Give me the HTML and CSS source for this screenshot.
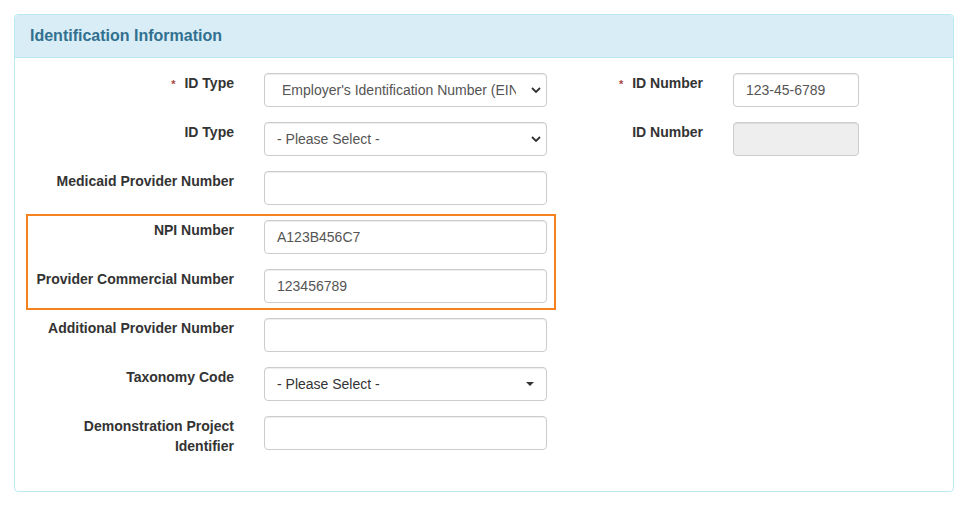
FILE: index.html
```html
<!DOCTYPE html>
<html lang="en">
<head>
<meta charset="utf-8">
<title>Identification Information</title>
<link rel="stylesheet" href="styles.css">
</head>
<body>
<div class="panel">
  <div class="panel-heading">Identification Information</div>
  <div class="panel-body">
    <div class="col-left">
      <div class="row">
        <label class="lbl"><span class="req">*</span>ID Type</label>
        <div class="select-wrap">
          <select class="ctl sel sel-ein"><option>Employer's Identification Number (EIN)</option></select>
          <svg class="chev" width="10" height="6" viewBox="0 0 10 6"><path d="M1 1 L5 5 L9 1" fill="none" stroke="#333" stroke-width="1.8"/></svg>
        </div>
      </div>
      <div class="row">
        <label class="lbl">ID Type</label>
        <div class="select-wrap">
          <select class="ctl sel"><option>- Please Select -</option></select>
          <svg class="chev" width="10" height="6" viewBox="0 0 10 6"><path d="M1 1 L5 5 L9 1" fill="none" stroke="#333" stroke-width="1.8"/></svg>
        </div>
      </div>
      <div class="row">
        <label class="lbl">Medicaid Provider Number</label>
        <input class="ctl" type="text" value="">
      </div>
      <div class="highlight">
        <div class="row">
          <label class="lbl">NPI Number</label>
          <input class="ctl" type="text" value="A123B456C7">
        </div>
        <div class="row">
          <label class="lbl">Provider Commercial Number</label>
          <input class="ctl" type="text" value="123456789">
        </div>
      </div>
      <div class="row">
        <label class="lbl">Additional Provider Number</label>
        <input class="ctl" type="text" value="">
      </div>
      <div class="row">
        <label class="lbl">Taxonomy Code</label>
        <div class="ctl dropdown">
          <span>- Please Select -</span>
          <span class="caret"></span>
        </div>
      </div>
      <div class="row last">
        <label class="lbl">Demonstration Project Identifier</label>
        <input class="ctl" type="text" value="">
      </div>
    </div>
    <div class="col-right">
      <div class="row row-r">
        <label class="lbl"><span class="req">*</span>ID Number</label>
        <input class="ctl" type="text" value="123-45-6789">
      </div>
      <div class="row row-r">
        <label class="lbl">ID Number</label>
        <input class="ctl disabled" type="text" value="" disabled>
      </div>
    </div>
  </div>
</div>
</body>
</html>
```
FILE: styles.css
```css
* { box-sizing: border-box; }
html, body { margin: 0; padding: 0; background: #fff; }
body {
  font-family: "Liberation Sans", Arial, sans-serif;
  font-size: 14px;
  line-height: 20px;
  color: #333;
  padding: 14px 0 0 14px;
}
.panel {
  width: 940px;
  height: 478px;
  border: 1px solid #bce8f1;
  border-radius: 4px;
  background: #fff;
}
.panel-heading {
  height: 43px;
  padding: 10px 15px;
  background: #d9edf7;
  border-bottom: 1px solid #bce8f1;
  border-radius: 3px 3px 0 0;
  color: #31708f;
  font-size: 16px;
  font-weight: bold;
  line-height: 22px;
}
.panel-body {
  padding: 15px 15px 15px 15px;
  display: flex;
  align-items: flex-start;
}
.col-left { width: 517px; display: flex; flex-direction: column; }
.col-right { margin-left: 71px; display: flex; flex-direction: column; }
.row {
  display: grid;
  grid-template-columns: 204px 283px;
  column-gap: 30px;
  margin-bottom: 15px;
  align-items: start;
}
.row-r { grid-template-columns: 85px 126px; }
.lbl {
  text-align: right;
  font-weight: bold;
  color: #333;
  line-height: 20px;
}
.req {
  color: #a94442;
  font-size: 11px;
  margin-right: 9px;
}
.ctl {
  display: block;
  width: 100%;
  height: 34px;
  padding: 6px 12px;
  font-family: "Liberation Sans", Arial, sans-serif;
  font-size: 14px;
  line-height: 20px;
  color: #555;
  background: #fff;
  border: 1px solid #ccc;
  border-radius: 4px;
  box-shadow: inset 0 1px 1px rgba(0,0,0,.075);
  outline: none;
  margin: 0;
}
.ctl.disabled { background: #eee; }
.select-wrap { position: relative; width: 283px; }
.sel {
  -webkit-appearance: none;
  appearance: none;
  padding-left: 12px;
  padding-right: 30px;
}
.sel-ein { padding-left: 17px; }
.chev { position: absolute; right: 6px; top: 14px; }
.dropdown {
  display: flex;
  align-items: center;
  justify-content: space-between;
  padding: 6px 12px 6px 12px;
  color: #333;
}
.caret {
  width: 0;
  height: 0;
  border-left: 4px solid transparent;
  border-right: 4px solid transparent;
  border-top: 4px solid #333;
}
.highlight {
  border: 2px solid #f5821f;
  margin: -6px -9px 8px -4px;
  padding: 4px 7px 0 2px;
}
.highlight .row:last-child { margin-bottom: 5px; }
.row.last { margin-bottom: 0; }
```
